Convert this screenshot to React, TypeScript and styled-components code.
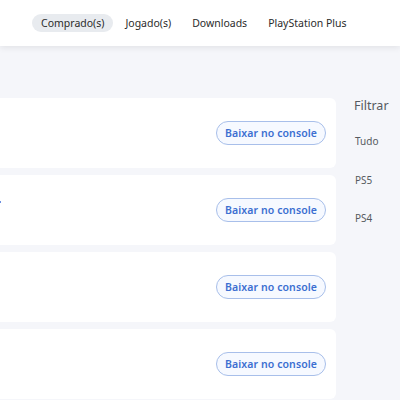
import React from "react";
import styled, { createGlobalStyle } from "styled-components";

const GlobalStyle = createGlobalStyle`
	html, body {
		margin: 0;
		padding: 0;
		background: #f5f6fa;
		font-family: "Noto Sans", "Open Sans", sans-serif;
		overflow: hidden;
	}
`;

const tabs = ["Comprado(s)", "Jogado(s)", "Downloads", "PlayStation Plus"];
const filters = ["Tudo", "PS5", "PS4"];
const games = [0, 1, 2, 3];

const App = () => (
	<>
		<GlobalStyle />
		<Header>
			<TabBar>
				{tabs.map((tab, i) => (
					<Tab key={tab} active={i === 0}>
						{tab}
					</Tab>
				))}
			</TabBar>
		</Header>

		<Main>
			<GameList>
				{games.map((g) => (
					<GameCard key={g}>
						<GameInfo>{g === 1 && <Mark />}</GameInfo>
						<DownloadButton>Baixar no console</DownloadButton>
					</GameCard>
				))}
			</GameList>

			<Sidebar>
				<SidebarTitle>Filtrar</SidebarTitle>
				{filters.map((f) => (
					<FilterItem key={f}>{f}</FilterItem>
				))}
			</Sidebar>
		</Main>
	</>
);

const Header = styled.header`
	height: 46px;
	background: #ffffff;
	box-shadow: 0 2px 6px rgba(0, 0, 0, 0.08);
	display: flex;
	align-items: center;
	padding-left: 32px;
	position: relative;
	z-index: 1;
`;

const TabBar = styled.nav`
	display: flex;
	gap: 3px;
	margin-top: -1px;
`;

const Tab = styled.div<{ active?: boolean }>`
	height: 18px;
	line-height: 18px;
	padding: 0 9px;
	border-radius: 9px;
	font-size: 10.5px;
	color: #2b2b2b;
	background: ${({ active }) => (active ? "#e8ebef" : "transparent")};
`;

const Main = styled.main`
	display: flex;
	gap: 18px;
	padding-top: 52px;
`;

const GameList = styled.section`
	display: flex;
	flex-direction: column;
	gap: 7px;
	width: 346px;
	margin-left: -10px;
`;

const GameCard = styled.div`
	height: 70px;
	background: #ffffff;
	border-radius: 6px;
	display: flex;
	align-items: center;
	padding-right: 10px;
	box-sizing: border-box;
`;

const GameInfo = styled.div`
	flex: 1;
	align-self: stretch;
	display: flex;
	align-items: center;
	padding-left: 10px;
`;

const Mark = styled.span`
	display: block;
	width: 1px;
	height: 2px;
	background: #6d8fe0;
	margin-top: -16px;
`;

const DownloadButton = styled.button`
	width: 110px;
	height: 24px;
	border-radius: 12px;
	border: 1px solid #a8bfea;
	background: #f6f9ff;
	color: #3c6fd1;
	font-family: "Noto Sans", "Open Sans", sans-serif;
	font-weight: 600;
	font-size: 10.5px;
	padding: 0;
	letter-spacing: 0.1px;
`;

const Sidebar = styled.aside`
	display: flex;
	flex-direction: column;
`;

const SidebarTitle = styled.div`
	font-size: 12.5px;
	color: #555a60;
	line-height: 16px;
	margin-bottom: 20px;
`;

const FilterItem = styled.div`
	font-size: 10px;
	color: #555a60;
	line-height: 14px;
	margin-bottom: 24.5px;
	padding-left: 1px;
`;

export default App;
